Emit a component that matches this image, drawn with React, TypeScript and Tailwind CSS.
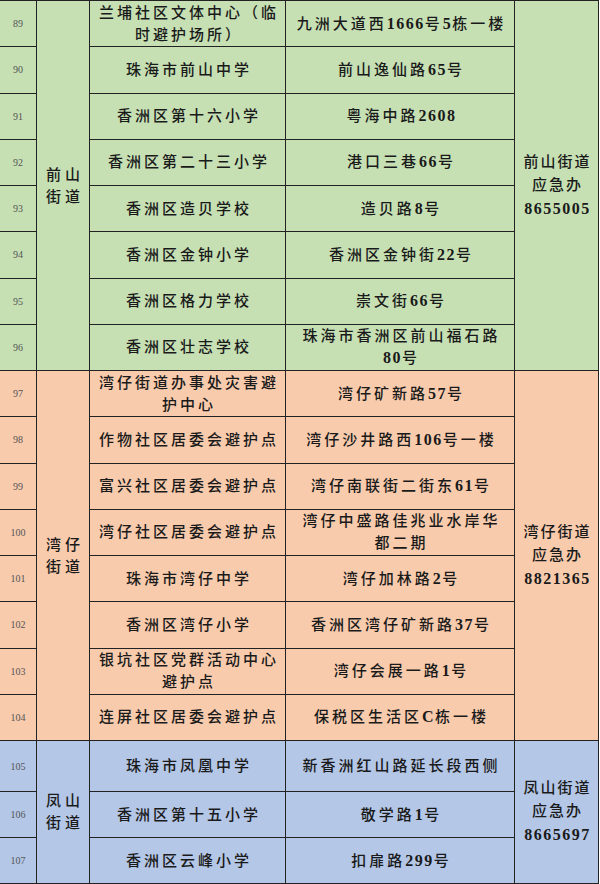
type Row = { no: number; name: string[]; addr: string[] };

type Section = {
  bg: string;
  rows: string;
  street: string[];
  contact: string[];
  items: Row[];
};

const sections: Section[] = [
  {
    bg: "bg-[#c6e0b4]",
    rows: "grid-rows-[repeat(8,46.25px)]",
    street: ["前山", "街道"],
    contact: ["前山街道", "应急办", "8655005"],
    items: [
      { no: 89, name: ["兰埔社区文体中心（临", "时避护场所）"], addr: ["九洲大道西1666号5栋一楼"] },
      { no: 90, name: ["珠海市前山中学"], addr: ["前山逸仙路65号"] },
      { no: 91, name: ["香洲区第十六小学"], addr: ["粤海中路2608"] },
      { no: 92, name: ["香洲区第二十三小学"], addr: ["港口三巷66号"] },
      { no: 93, name: ["香洲区造贝学校"], addr: ["造贝路8号"] },
      { no: 94, name: ["香洲区金钟小学"], addr: ["香洲区金钟街22号"] },
      { no: 95, name: ["香洲区格力学校"], addr: ["崇文街66号"] },
      { no: 96, name: ["香洲区壮志学校"], addr: ["珠海市香洲区前山福石路", "80号"] },
    ],
  },
  {
    bg: "bg-[#f8cbad]",
    rows: "grid-rows-[repeat(8,46.25px)]",
    street: ["湾仔", "街道"],
    contact: ["湾仔街道", "应急办", "8821365"],
    items: [
      { no: 97, name: ["湾仔街道办事处灾害避", "护中心"], addr: ["湾仔矿新路57号"] },
      { no: 98, name: ["作物社区居委会避护点"], addr: ["湾仔沙井路西106号一楼"] },
      { no: 99, name: ["富兴社区居委会避护点"], addr: ["湾仔南联街二街东61号"] },
      { no: 100, name: ["湾仔社区居委会避护点"], addr: ["湾仔中盛路佳兆业水岸华", "都二期"] },
      { no: 101, name: ["珠海市湾仔中学"], addr: ["湾仔加林路2号"] },
      { no: 102, name: ["香洲区湾仔小学"], addr: ["香洲区湾仔矿新路37号"] },
      { no: 103, name: ["银坑社区党群活动中心", "避护点"], addr: ["湾仔会展一路1号"] },
      { no: 104, name: ["连屏社区居委会避护点"], addr: ["保税区生活区C栋一楼"] },
    ],
  },
  {
    bg: "bg-[#b4c7e7]",
    rows: "grid-rows-[51px_46px_46px]",
    street: ["凤山", "街道"],
    contact: ["凤山街道", "应急办", "8665697"],
    items: [
      { no: 105, name: ["珠海市凤凰中学"], addr: ["新香洲红山路延长段西侧"] },
      { no: 106, name: ["香洲区第十五小学"], addr: ["敬学路1号"] },
      { no: 107, name: ["香洲区云峰小学"], addr: ["扣扉路299号"] },
    ],
  },
];

const font = "font-['Liberation_Serif','Noto_Sans_CJK_SC',serif]";
const cell = "border-r border-b border-[#222] flex items-center justify-center text-center";

// latin runs (digits, the "C" in C栋) are bold serif and a touch tighter in the source
const Text = ({ s }: { s: string }) => (
  <>
    {s.split(/([0-9A-Za-z]+)/).map((p, i) =>
      /^[0-9A-Za-z]+$/.test(p) ? (
        <span key={i} className="font-bold text-[16px] tracking-[1.5px]">
          {p}
        </span>
      ) : (
        <span key={i}>{p}</span>
      )
    )}
  </>
);

const Lines = ({ lines, cls }: { lines: string[]; cls: string }) => (
  <div className={cls}>
    {lines.map((l) => (
      <div key={l}>
        <Text s={l} />
      </div>
    ))}
  </div>
);

const Block = ({ s }: { s: Section }) => (
  <div className={`grid grid-cols-[37px_53px_196px_229px_84px] ${s.rows} ${s.bg}`}>
    {s.items.map((r, i) => (
      <div key={r.no} className="contents">
        <div className={`${cell} text-[10px] text-[#555]`}>{r.no}</div>
        {i === 0 && (
          <div className={`${cell} row-span-full col-start-2 text-[15px] font-medium text-[#1a1a1a]`}>
            <Lines lines={s.street} cls="leading-[22px] tracking-[4px] pl-[4px]" />
          </div>
        )}
        <div className={`${cell} col-start-3 text-[15px] font-medium text-[#1a1a1a]`}>
          <Lines lines={r.name} cls="leading-[22px] tracking-[3px] pl-[3px]" />
        </div>
        <div className={`${cell} col-start-4 text-[15px] font-medium text-[#1a1a1a]`}>
          <Lines lines={r.addr} cls="leading-[22px] tracking-[3px] pl-[3px]" />
        </div>
        {i === 0 && (
          <div className={`${cell} row-span-full col-start-5 text-[15px] font-medium text-[#1a1a1a]`}>
            <Lines lines={s.contact} cls="leading-[23px] tracking-[2px] pl-[2px]" />
          </div>
        )}
      </div>
    ))}
  </div>
);

export default function App() {
  return (
    <div className={`w-[600px] h-[884px] bg-white overflow-hidden ${font}`}>
      <div className="w-[599px] border-t border-[#222]">
        {sections.map((s) => (
          <Block key={s.contact[2]} s={s} />
        ))}
      </div>
    </div>
  );
}
